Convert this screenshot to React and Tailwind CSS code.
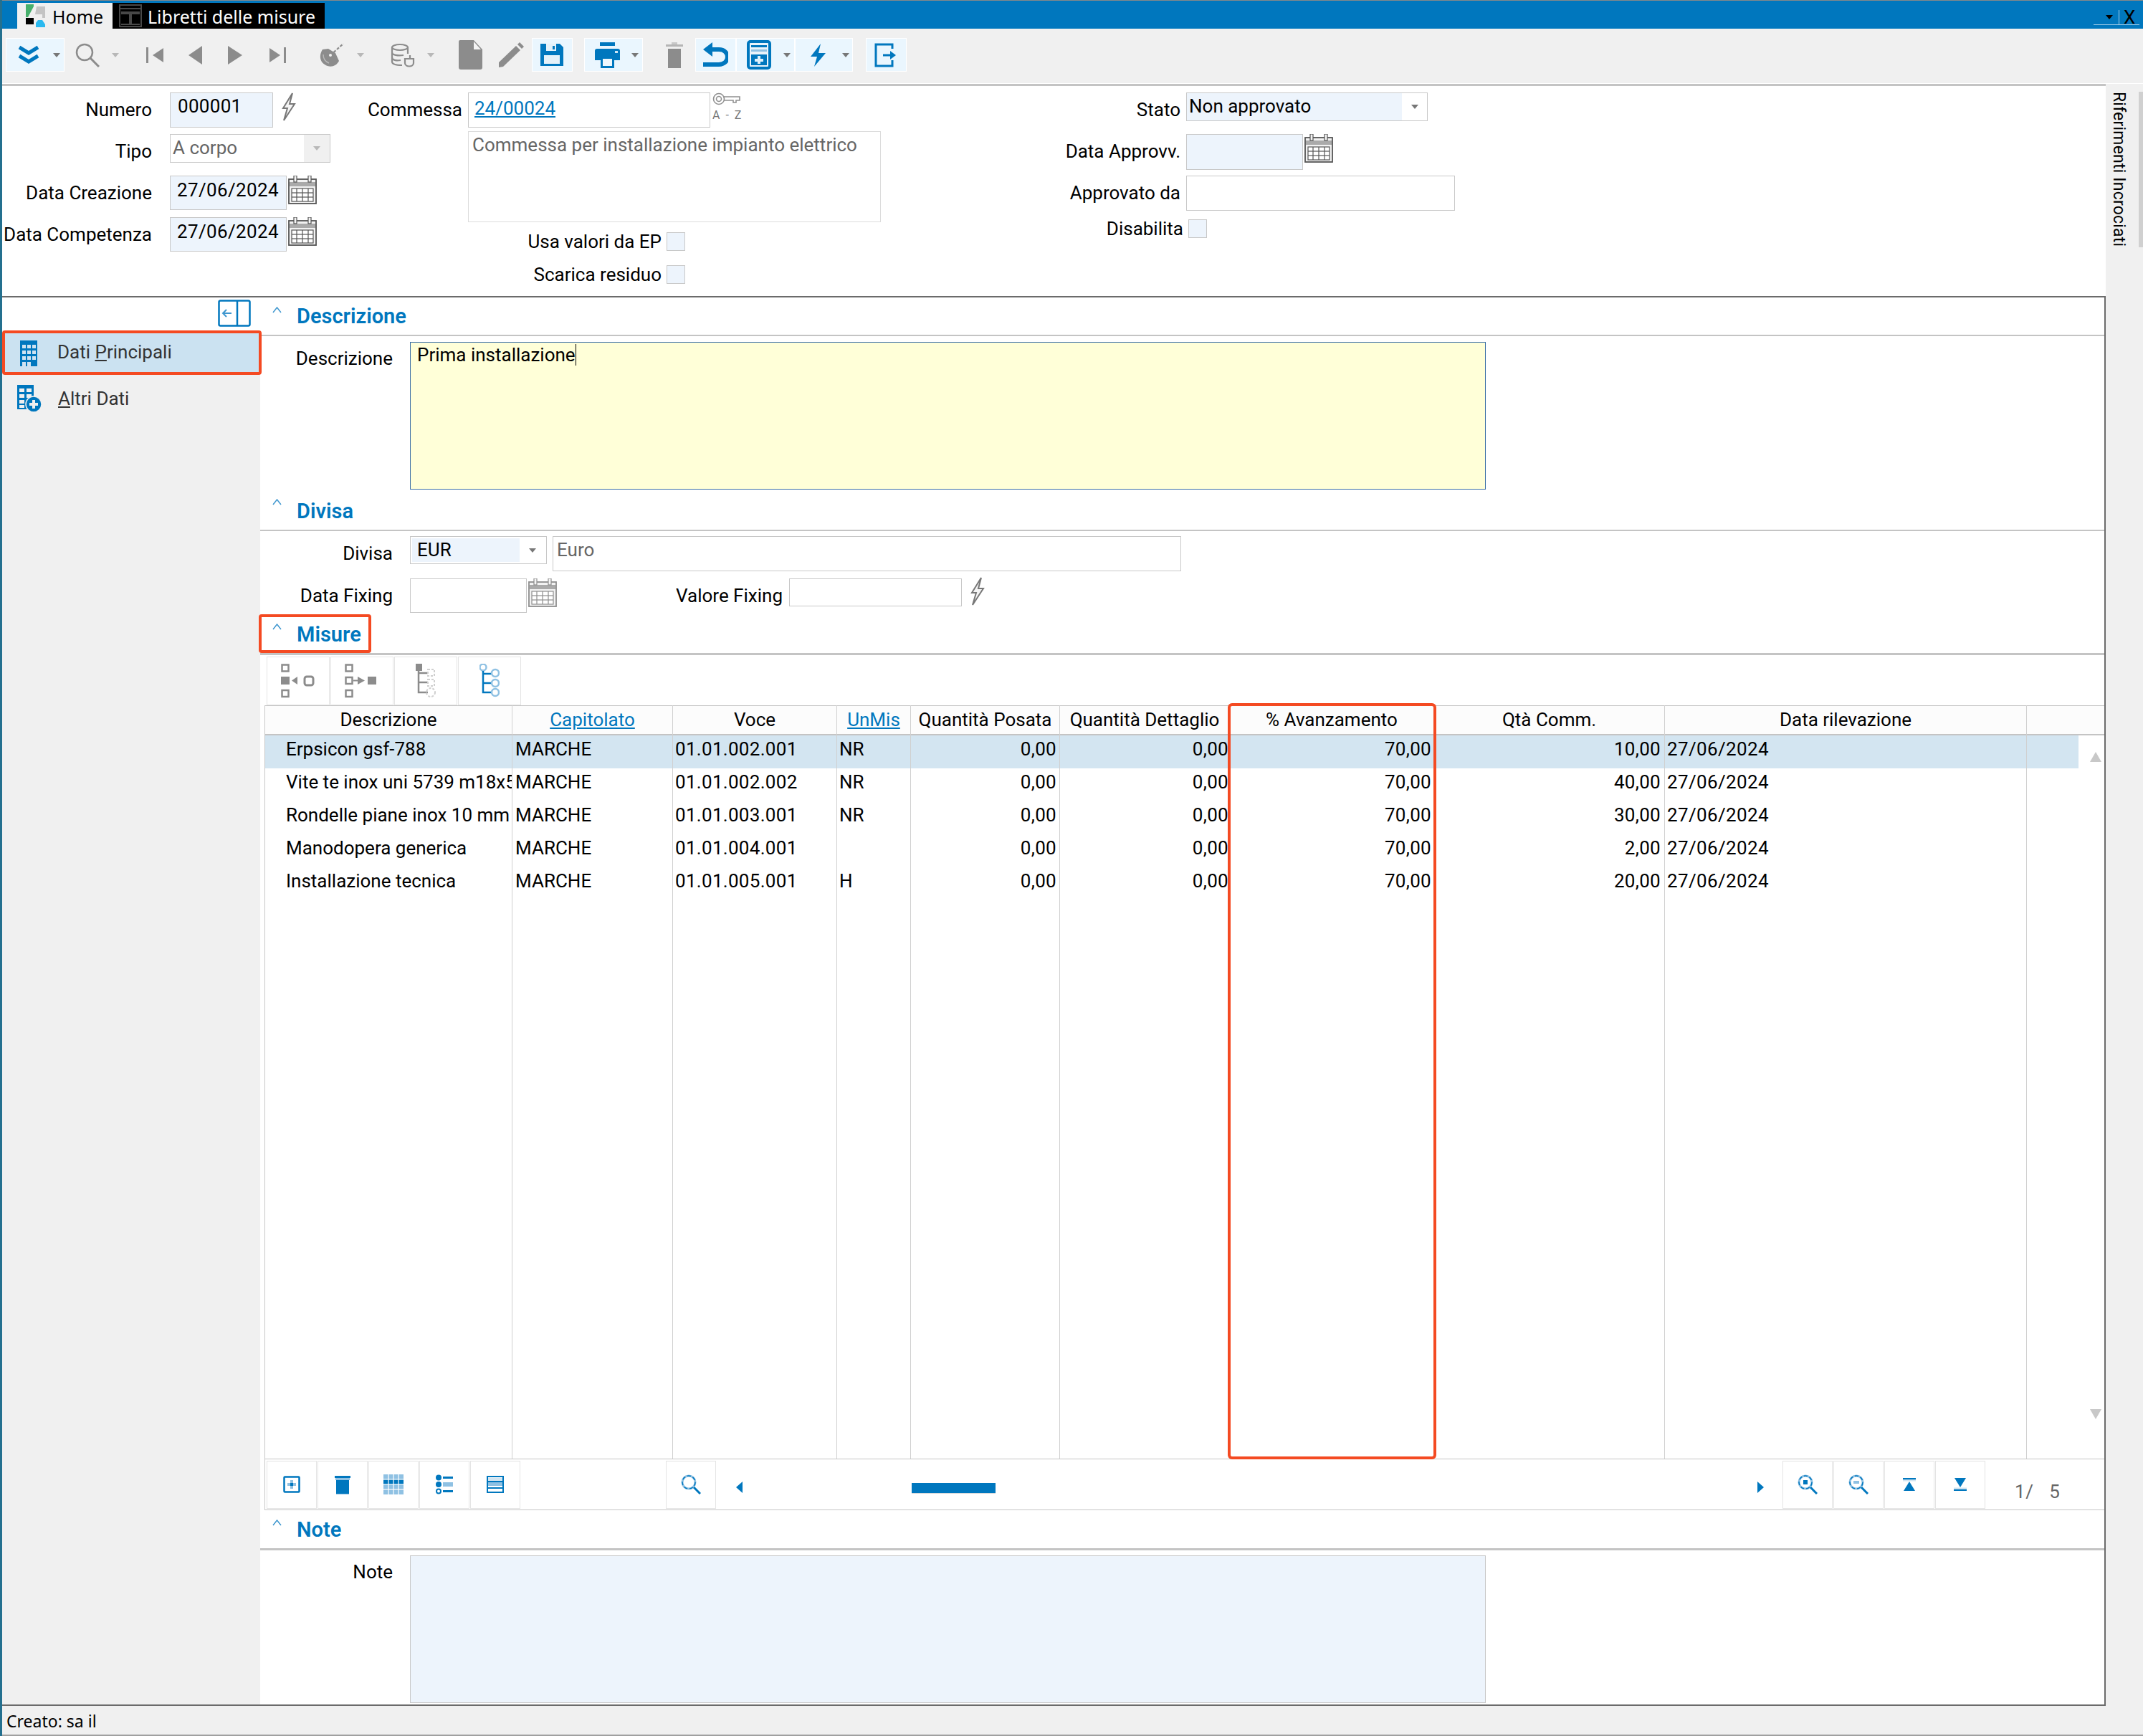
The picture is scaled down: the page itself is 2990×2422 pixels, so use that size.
import React from 'react';

const BLUE = '#0077be';
const LB = '#8fc1e3';
const GR = '#8c8c8c';

const Caret = ({ light, dark, className = '' }) => (
  <svg width="10" height="6" viewBox="0 0 10 6" className={className}>
    <polygon points="0,0 10,0 5,6" fill={dark ? '#000000' : light ? '#b8b8b8' : '#777777'} />
  </svg>
);

const Logo = () => (
  <svg width="27" height="32" viewBox="0 0 27 32">
    <polygon points="0,0 11,0 11,3 3,18 0,18" fill="#47b06c" />
    <polygon points="15,3 27,3 27,19 23,19 23,14 13,14" fill="#c4c4c4" />
    <rect x="0" y="19" width="11" height="9" fill="#000" />
    <polygon points="17,22 23,22 27,28 27,32 14,32 14,26" fill="#2bb9ef" />
  </svg>
);

const TabIcon = () => (
  <svg width="32" height="32" viewBox="0 0 32 32">
    <rect x="1" y="1" width="30" height="30" fill="none" stroke="#484848" strokeWidth="2" />
    <rect x="1" y="5" width="30" height="2" fill="#484848" />
    <rect x="3" y="10" width="26" height="4" fill="#484848" />
    <rect x="5" y="15" width="9" height="12" fill="#000" />
    <rect x="18" y="15" width="9" height="12" fill="#000" />
    <rect x="14" y="14" width="4" height="15" fill="#484848" />
    <rect x="3" y="27" width="26" height="2" fill="#484848" />
  </svg>
);

const Chevrons = () => (
  <svg width="30" height="27" viewBox="0 0 30 27">
    <path d="M2 3 L15 11 L28 3" fill="none" stroke={BLUE} strokeWidth="5" />
    <path d="M2 15 L15 23 L28 15" fill="none" stroke={BLUE} strokeWidth="5" />
  </svg>
);

const SearchIcon = () => (
  <svg width="34" height="34" viewBox="0 0 34 34">
    <circle cx="13" cy="13" r="11" fill="none" stroke={GR} strokeWidth="2.5" />
    <line x1="21" y1="21" x2="33" y2="33" stroke={GR} strokeWidth="3" />
  </svg>
);

const First = () => (
  <svg width="24" height="24" viewBox="0 0 24 24">
    <rect x="0" y="1" width="3" height="22" fill={GR} />
    <polygon points="9,12 24,2 24,22" fill={GR} />
  </svg>
);
const Prev = () => (
  <svg width="19" height="26" viewBox="0 0 19 26"><polygon points="0,13 19,0 19,26" fill={GR} /></svg>
);
const Next = () => (
  <svg width="20" height="26" viewBox="0 0 20 26"><polygon points="20,13 0,0 0,26" fill={GR} /></svg>
);
const Last = () => (
  <svg width="23" height="24" viewBox="0 0 23 24">
    <rect x="20" y="1" width="3" height="22" fill={GR} />
    <polygon points="15,12 0,2 0,22" fill={GR} />
  </svg>
);

const Dish = () => (
  <svg width="35" height="34" viewBox="0 0 35 34">
    <path d="M4 9 C-1 17 0 26 7 30 C14 35 23 33 27 25 L22 14 L12 8 Z" fill={GR} />
    <line x1="15" y1="17" x2="33" y2="1" stroke={GR} strokeWidth="2.2" strokeDasharray="4 2" />
    <circle cx="15" cy="17" r="2" fill="#f0f0f0" />
    <path d="M5 16 C5 22 8 26 13 28" fill="none" stroke="#b8b8b8" strokeWidth="1.5" />
  </svg>
);

const Db = () => (
  <svg width="35" height="34" viewBox="0 0 35 34" fill="none" stroke={GR} strokeWidth="2.2">
    <ellipse cx="13" cy="6" rx="11" ry="4" />
    <path d="M2 6 V26 C2 30 8 31 16 31" />
    <path d="M24 6 V15" />
    <path d="M2 13 C2 17 10 18 18 17" />
    <path d="M2 20 C2 24 8 25 14 24" />
    <path d="M20 22 H32 V28 C32 34 20 34 20 28 Z" />
    <path d="M27 22 V17" />
  </svg>
);

const Doc = () => (
  <svg width="33" height="41" viewBox="0 0 33 41">
    <path d="M2 0 H21 L33 13 V38 Q33 41 30 41 H3 Q0 41 0 38 V2 Q0 0 2 0 Z" fill={GR} />
    <path d="M21 2 L31 13 H21 Z" fill="#f4f4f4" />
  </svg>
);

const Pencil = () => (
  <svg width="35" height="35" viewBox="0 0 35 35">
    <polygon points="0,28 24,5 30,11 6,34 0,35" fill={GR} />
    <polygon points="26,3 29,0 35,6 32,9" fill={GR} />
  </svg>
);

const Save = () => (
  <svg width="32" height="31" viewBox="0 0 32 31">
    <path d="M0 0 H27 L32 5 V31 H0 Z" fill={BLUE} />
    <rect x="8" y="0" width="14" height="10" fill="#e4f1f9" />
    <rect x="17" y="3" width="3" height="5" fill={BLUE} />
    <rect x="5" y="16" width="22" height="12" fill="#e4f1f9" />
  </svg>
);

const Printer = () => (
  <svg width="35" height="36" viewBox="0 0 35 36">
    <rect x="7" y="0" width="21" height="5" fill={BLUE} />
    <path d="M3 9 H32 Q35 9 35 12 V25 H0 V12 Q0 9 3 9 Z" fill={BLUE} />
    <rect x="28" y="12" width="4" height="3" fill="#cfe6f5" />
    <rect x="8" y="20" width="19" height="16" fill={BLUE} />
    <rect x="11" y="23" width="13" height="10" fill="#eef7fd" />
  </svg>
);

const TrashGrey = () => (
  <svg width="24" height="36" viewBox="0 0 24 36">
    <rect x="0" y="3" width="24" height="3" fill="#b5b5b5" />
    <rect x="8" y="0" width="8" height="3" fill="#c8c8c8" />
    <rect x="3" y="9" width="18" height="27" fill={GR} />
  </svg>
);

const Undo = () => (
  <svg width="35" height="35" viewBox="0 0 35 35">
    <polygon points="0,10 13,0 13,20" fill={BLUE} />
    <path d="M10 10 H22 C38 10 38 31 22 31 H0" fill="none" stroke={BLUE} strokeWidth="6" />
  </svg>
);

const Calc = () => (
  <svg width="34" height="41" viewBox="0 0 34 41">
    <rect x="2" y="2" width="30" height="37" rx="3" fill="#e9f3fa" stroke={BLUE} strokeWidth="4" />
    <rect x="6" y="7" width="22" height="3" fill={BLUE} />
    <rect x="6" y="13" width="22" height="3" fill={LB} />
    <rect x="6" y="20" width="22" height="15" fill={BLUE} />
    <rect x="15" y="22" width="4" height="11" fill="#dff0fa" />
    <rect x="11" y="26" width="12" height="4" fill="#dff0fa" />
  </svg>
);

const Bolt = () => (
  <svg width="21" height="32" viewBox="0 0 21 32">
    <polygon points="14,0 0,18 9,18 5,32 21,13 11,13" fill={BLUE} />
  </svg>
);

const ExitIcon = () => (
  <svg width="30" height="34" viewBox="0 0 30 34" fill="none">
    <path d="M25 8 V2 H2 V32 H25 V24" stroke={BLUE} strokeWidth="3" />
    <path d="M12 17 H24" stroke={BLUE} strokeWidth="3" />
    <polygon points="22,11 30,17 22,23" fill={BLUE} />
  </svg>
);

const BoltOutline = () => (
  <svg width="23" height="40" viewBox="0 0 23 40" fill="#f4f4f4" stroke="#777777" strokeWidth="2">
    <polygon points="17,1 4,22 10,22 5,39 20,16 13,16" />
  </svg>
);

const CalendarIcon = ({ light }) => {
  const c = light ? '#8e8e8e' : '#555555';
  return (
    <svg width="40" height="40" viewBox="0 0 40 40">
      <rect x="1" y="5" width="38" height="34" fill="#f2f2f2" stroke={c} strokeWidth="1.8" />
      <rect x="2" y="9" width="36" height="6" fill="#aaaaaa" />
      <rect x="8" y="0" width="4" height="9" fill="#f4f4f4" stroke={c} strokeWidth="1.2" />
      <rect x="28" y="0" width="4" height="9" fill="#f4f4f4" stroke={c} strokeWidth="1.2" />
      <g stroke={c} strokeWidth="1.2">
        <rect x="5" y="18" width="30" height="18" fill="#ffffff" />
        <line x1="5" y1="24" x2="35" y2="24" />
        <line x1="5" y1="30" x2="35" y2="30" />
        <line x1="12" y1="18" x2="12" y2="36" />
        <line x1="20" y1="18" x2="20" y2="36" />
        <line x1="28" y1="18" x2="28" y2="36" />
      </g>
    </svg>
  );
};

const KeyIcon = () => (
  <svg width="40" height="20" viewBox="0 0 40 20" fill="none" stroke="#909090" strokeWidth="1.6">
    <circle cx="9" cy="9" r="7.5" />
    <circle cx="9" cy="9" r="3.5" />
    <path d="M16 6 H38 V11 H33 V14 H29 V11 H16" />
  </svg>
);

const Collapse = () => (
  <svg width="46" height="38" viewBox="0 0 46 38" fill="none">
    <rect x="1.5" y="1.5" width="43" height="35" rx="2" stroke={BLUE} strokeWidth="2.5" />
    <line x1="27" y1="2" x2="27" y2="36" stroke={BLUE} strokeWidth="2.5" />
    <path d="M19 19 H7 M12 14 L7 19 L12 24" stroke="#3f97cf" strokeWidth="2" />
  </svg>
);

const SectionCaret = () => (
  <svg width="13" height="9" viewBox="0 0 13 9" fill="none">
    <path d="M1 8 L6.5 1 L12 8" stroke="#3f97cf" strokeWidth="1.5" />
  </svg>
);

const GridBuilding = () => (
  <svg width="27" height="36" viewBox="0 0 27 36">
    <rect x="0" y="0" width="24" height="36" fill={BLUE} />
    <g fill="#cfe3f1">
      <rect x="3" y="6" width="5" height="5" /><rect x="10" y="6" width="5" height="5" /><rect x="17" y="6" width="5" height="5" />
      <rect x="3" y="14" width="5" height="5" /><rect x="10" y="14" width="5" height="5" /><rect x="17" y="14" width="5" height="5" />
      <rect x="3" y="22" width="5" height="5" /><rect x="10" y="22" width="5" height="5" /><rect x="17" y="22" width="5" height="5" />
      <rect x="3" y="30" width="5" height="6" /><rect x="10" y="30" width="5" height="6" />
    </g>
  </svg>
);

const GridPlus = () => (
  <svg width="34" height="38" viewBox="0 0 34 38">
    <rect x="0" y="0" width="23" height="34" fill={BLUE} />
    <g fill="#f0f0f0">
      <rect x="3" y="5" width="7" height="5" /><rect x="13" y="5" width="7" height="5" />
      <rect x="3" y="13" width="7" height="5" /><rect x="13" y="13" width="7" height="5" />
      <rect x="3" y="21" width="7" height="5" />
      <rect x="3" y="28" width="7" height="4" />
    </g>
    <circle cx="23" cy="27" r="11" fill={BLUE} stroke="#f0f0f0" strokeWidth="1.5" />
    <rect x="17" y="25" width="12" height="4" fill="#f0f0f0" />
    <rect x="21" y="21" width="4" height="12" fill="#f0f0f0" />
  </svg>
);

const sq = { fill: 'none', stroke: GR, strokeWidth: 2.5 };
const Tree1 = () => (
  <svg width="48" height="48" viewBox="0 0 48 48">
    <rect x="1.5" y="1.5" width="9" height="9" {...sq} />
    <rect x="0" y="18" width="12" height="11" fill={GR} />
    <polygon points="15,23.5 23,18 23,29" fill={GR} />
    <rect x="33" y="18" width="12" height="12" rx="3" fill="none" stroke={GR} strokeWidth="3" />
    <rect x="1.5" y="37" width="9" height="9" {...sq} />
  </svg>
);
const Tree2 = () => (
  <svg width="48" height="48" viewBox="0 0 48 48">
    <rect x="1.5" y="1.5" width="9" height="9" {...sq} />
    <rect x="1.5" y="19" width="9" height="9" {...sq} />
    <rect x="1.5" y="37" width="9" height="9" {...sq} />
    <path d="M12 23.5 H18" stroke={GR} strokeWidth="2" />
    <polygon points="28,23.5 18,18 18,29" fill={GR} />
    <rect x="32" y="18" width="12" height="11" fill={GR} />
  </svg>
);
const Tree3 = () => (
  <svg width="28" height="48" viewBox="0 0 28 48">
    <rect x="0" y="0" width="9" height="10" fill={GR} />
    <path d="M4 10 V40 H17 M4 13 H17 M4 26 H17" fill="none" stroke={GR} strokeWidth="2.5" />
    <g fill="none" stroke="#cfcfcf" strokeWidth="2" strokeDasharray="3 2">
      <rect x="17" y="8" width="9" height="9" />
      <rect x="17" y="22" width="9" height="9" />
      <circle cx="21" cy="40" r="6" />
    </g>
  </svg>
);
const Tree4 = () => (
  <svg width="28" height="48" viewBox="0 0 28 48">
    <circle cx="5" cy="5" r="4.5" fill="none" stroke={LB} strokeWidth="2.5" />
    <path d="M5 10 V40 H17 M5 14 H17 M5 27 H17" fill="none" stroke={BLUE} strokeWidth="2.5" />
    <g fill="none" stroke={LB} strokeWidth="2.5">
      <circle cx="22" cy="13" r="5" /><circle cx="22" cy="27" r="5" /><circle cx="22" cy="40" r="5" />
    </g>
  </svg>
);

const AddBox = () => (
  <svg width="24" height="24" viewBox="0 0 24 24">
    <rect x="1.5" y="1.5" width="21" height="21" rx="1" fill="#fff" stroke={BLUE} strokeWidth="2.5" />
    <rect x="10" y="6" width="4" height="12" fill={LB} />
    <rect x="6" y="10" width="12" height="4" fill={LB} />
    <rect x="10" y="10" width="4" height="4" fill={BLUE} />
  </svg>
);
const TrashBlue = () => (
  <svg width="22" height="28" viewBox="0 0 22 28">
    <rect x="0" y="2" width="22" height="3" fill={BLUE} />
    <rect x="1" y="5" width="20" height="3" fill={LB} />
    <rect x="2" y="8" width="18" height="19" fill={BLUE} />
    <rect x="2" y="27" width="18" height="1" fill={LB} />
  </svg>
);
const GridBlue = () => (
  <svg width="28" height="28" viewBox="0 0 28 28">
    <rect width="28" height="28" fill={LB} />
    <rect x="0" y="7" width="28" height="7" fill={BLUE} />
    <g stroke="#fff" strokeWidth="1.2">
      <line x1="7" y1="0" x2="7" y2="28" /><line x1="14" y1="0" x2="14" y2="28" /><line x1="21" y1="0" x2="21" y2="28" />
      <line x1="0" y1="7" x2="28" y2="7" /><line x1="0" y1="14" x2="28" y2="14" /><line x1="0" y1="21" x2="28" y2="21" />
    </g>
  </svg>
);
const ListBlue = () => (
  <svg width="24" height="28" viewBox="0 0 24 28">
    <circle cx="4" cy="4.5" r="4" fill={BLUE} /><rect x="10" y="3" width="14" height="3" fill={BLUE} />
    <circle cx="4" cy="14" r="4" fill={BLUE} /><rect x="10" y="11" width="14" height="6" fill={LB} />
    <circle cx="4" cy="23.5" r="3" fill="#fff" stroke={BLUE} strokeWidth="2" /><rect x="10" y="22" width="14" height="3" fill={BLUE} />
  </svg>
);
const RowsBlue = () => (
  <svg width="24" height="24" viewBox="0 0 24 24">
    <rect x="1" y="1" width="22" height="22" fill="#fff" stroke={BLUE} strokeWidth="2" />
    <rect x="2" y="3" width="20" height="4" fill="#d3e5f1" />
    <rect x="2" y="9" width="20" height="5" fill={LB} />
    <rect x="2" y="7" width="20" height="2" fill={BLUE} />
    <rect x="2" y="16" width="20" height="2" fill={BLUE} />
  </svg>
);
const Mag = ({ mark }) => (
  <svg width="28" height="28" viewBox="0 0 28 28">
    <circle cx="11" cy="11" r="9" fill="none" stroke={LB} strokeWidth="3" />
    <circle cx="11" cy="11" r="9" fill="none" stroke={BLUE} strokeWidth="1.5" strokeDasharray="5 3" />
    <line x1="18" y1="18" x2="27" y2="27" stroke={BLUE} strokeWidth="3" />
    {mark === 'plus' && <rect x="8" y="8" width="6" height="6" fill={BLUE} />}
    {mark === 'minus' && <rect x="7" y="9" width="8" height="4" fill={LB} />}
  </svg>
);
const TopIcon = () => (
  <svg width="18" height="18" viewBox="0 0 18 18">
    <rect width="18" height="2.5" fill={BLUE} />
    <rect x="0" y="2.5" width="18" height="2" fill="#d3e5f1" />
    <polygon points="9,5 17,18 1,18" fill={BLUE} />
  </svg>
);
const BottomIcon = () => (
  <svg width="18" height="18" viewBox="0 0 18 18">
    <rect y="15.5" width="18" height="2.5" fill={BLUE} />
    <rect y="13.5" width="18" height="2" fill="#d3e5f1" />
    <polygon points="9,13 17,0 1,0" fill={BLUE} />
  </svg>
);
const ArrowL = () => (
  <svg width="9" height="16" viewBox="0 0 9 16"><polygon points="0,8 9,0 9,16" fill={BLUE} /></svg>
);
const ArrowR = () => (
  <svg width="9" height="16" viewBox="0 0 9 16"><polygon points="9,8 0,0 0,16" fill={BLUE} /></svg>
);

const Section = ({ h, title, children }) => (
  <div className={`relative flex items-center shrink-0 border-b-[#c4c4c4] ${h}`}>
    <div className="absolute left-[17px] top-[13px]"><SectionCaret /></div>
    <span className="pl-[51px] text-[29px] font-semibold text-[#0077be]">{title}</span>
    {children}
  </div>
);

const Field = ({ className = '', children }) => (
  <div className={`shrink-0 border border-[#c8c8c8] leading-[38px] whitespace-nowrap overflow-hidden ${className}`}>{children}</div>
);

const Label = ({ className = '', children }) => (
  <div className={`shrink-0 text-right leading-[48px] whitespace-nowrap ${className}`}>{children}</div>
);

const Check = () => <div className="w-[26px] h-[26px] shrink-0 border border-[#c8c8c8] bg-[#edf4fc]" />;

const rowsData = [
  ['Erpsicon gsf-788', 'MARCHE', '01.01.002.001', 'NR', '0,00', '0,00', '70,00', '10,00', '27/06/2024'],
  ['Vite te inox uni 5739 m18x55', 'MARCHE', '01.01.002.002', 'NR', '0,00', '0,00', '70,00', '40,00', '27/06/2024'],
  ['Rondelle piane inox 10 mm', 'MARCHE', '01.01.003.001', 'NR', '0,00', '0,00', '70,00', '30,00', '27/06/2024'],
  ['Manodopera generica', 'MARCHE', '01.01.004.001', '', '0,00', '0,00', '70,00', '2,00', '27/06/2024'],
  ['Installazione tecnica', 'MARCHE', '01.01.005.001', 'H', '0,00', '0,00', '70,00', '20,00', '27/06/2024'],
];

const columns = [
  { w: 'w-[345px]', head: 'Descrizione', cell: 'pl-[29px]' },
  { w: 'w-[224px]', head: 'Capitolato', link: true, cell: 'pl-[4px]' },
  { w: 'w-[229px]', head: 'Voce', cell: 'pl-[3px] tracking-[0.3px]' },
  { w: 'w-[103px]', head: 'UnMis', link: true, cell: 'pl-[3px]' },
  { w: 'w-[208px]', head: 'Quantità Posata', cell: 'pr-[4px] text-right tracking-[0.3px]' },
  { w: 'w-[237px]', head: 'Quantità Dettaglio', cell: 'pr-[1px] text-right tracking-[0.3px]' },
  { w: 'w-[285px]', head: '% Avanzamento', cell: 'pr-[3px] text-right tracking-[0.3px]' },
  { w: 'w-[322px]', head: 'Qtà Comm.', cell: 'pr-[5px] text-right tracking-[0.3px]' },
  { w: 'w-[505px]', head: 'Data rilevazione', cell: 'pl-[3px] tracking-[0.35px]' },
];

const Btn = ({ className = '', children }) => (
  <div className={`flex items-center justify-center shrink-0 border border-[#e4e4e4] ${className}`}>{children}</div>
);

export default function App() {
  return (
    <div className="w-[2990px] h-[2422px] flex flex-col bg-white overflow-hidden text-[26px] text-black font-['Roboto',sans-serif] border-l-[3px] border-l-[#24708f]">
      <div className="h-[40px] shrink-0 bg-[#0077be] border-t border-t-[#888888] flex items-end pl-[21px]">
        <div className="h-[36px] w-[133px] bg-[#f0f0f0] flex items-center pl-[12px] gap-[10px]">
          <Logo />
          <span className="font-['Noto_Sans',sans-serif] text-[25px] mt-[4px]">Home</span>
        </div>
        <div className="h-[36px] w-[296px] bg-black flex items-center pl-[9px] gap-[8px] text-white">
          <TabIcon />
          <span className="font-['Noto_Sans',sans-serif] text-[25px] mt-[4px] whitespace-nowrap">Libretti delle misure</span>
        </div>
        <div className="ml-auto mb-[5px] h-[21px] w-[64px] mr-[5px] flex items-center border-b border-b-[#a8cfe8]">
          <div className="w-[36px] h-full flex items-center justify-center border-r border-r-[#a8cfe8] pl-[8px]"><Caret dark /></div>
          <span className="pl-[6px] text-[26px] leading-none">X</span>
        </div>
      </div>

      <div className="h-[77px] shrink-0 bg-[#f0f0f0] border-b border-b-white flex items-start pt-[13px] pl-[5px]">
        <div className="h-[47px] w-[82px] bg-[#eaf6fe] border border-white flex items-center pl-[16px]"><Chevrons /><Caret className="ml-[19px]" /></div>
        <div className="h-[47px] flex items-center ml-[15px]"><SearchIcon /><Caret light className="ml-[17px]" /></div>
        <div className="h-[47px] flex items-center ml-[38px]"><First /></div>
        <div className="h-[47px] flex items-center ml-[35px]"><Prev /></div>
        <div className="h-[47px] flex items-center ml-[36px]"><Next /></div>
        <div className="h-[47px] flex items-center ml-[38px]"><Last /></div>
        <div className="h-[47px] flex items-center ml-[47px]"><Dish /><Caret light className="ml-[17px]" /></div>
        <div className="h-[47px] flex items-center ml-[37px]"><Db /><Caret light className="ml-[16px]" /></div>
        <div className="h-[47px] flex items-center ml-[34px]"><Doc /></div>
        <div className="h-[47px] flex items-center ml-[23px]"><Pencil /></div>
        <div className="h-[47px] w-[57px] ml-[11px] bg-[#eaf6fe] border border-white flex items-center pl-[11px]"><Save /></div>
        <div className="h-[47px] w-[82px] ml-[16px] bg-[#eaf6fe] border border-white flex items-center pl-[14px]"><Printer /><Caret className="ml-[16px]" /></div>
        <div className="h-[47px] flex items-center ml-[32px]"><TrashGrey /></div>
        <div className="h-[47px] w-[57px] ml-[17px] bg-[#eaf6fe] border border-white flex items-center pl-[10px]"><Undo /></div>
        <div className="h-[47px] w-[82px] bg-[#eaf6fe] border border-white flex items-center pl-[14px]"><Calc /><Caret className="ml-[17px]" /></div>
        <div className="h-[47px] w-[81px] bg-[#eaf6fe] border border-white flex items-center pl-[21px]"><Bolt /><Caret className="ml-[23px]" /></div>
        <div className="h-[47px] w-[57px] ml-[18px] bg-[#eaf6fe] border border-white flex items-center pl-[11px]"><ExitIcon /></div>
      </div>

      <div className="flex-1 min-h-0 flex">
        <div className="w-[2935px] shrink-0 flex flex-col">
          <div className="h-[296px] shrink-0 border-t-[3px] border-t-[#c4c4c4] pt-[9px] flex items-start">
            <div className="w-[458px] shrink-0 flex flex-col">
              <div className="h-[58px] flex items-start">
                <Label className="w-[209px]">Numero</Label>
                <Field className="ml-[25px] w-[144px] h-[49px] bg-[#edf4fc] pl-[10px] !leading-[36px] tracking-[0.3px]">000001</Field>
                <div className="ml-[10px]"><BoltOutline /></div>
              </div>
              <div className="h-[58px] flex items-start">
                <Label className="w-[209px]">Tipo</Label>
                <div className="ml-[25px] w-[224px] h-[40px] shrink-0 border border-[#c8c8c8] flex items-stretch text-[#666666]">
                  <span className="flex-1 pl-[3px] leading-[36px]">A corpo</span>
                  <div className="w-[36px] bg-[#f0f0f0] flex items-center justify-center"><Caret light /></div>
                </div>
              </div>
              <div className="h-[58px] flex items-start">
                <Label className="w-[209px]">Data Creazione</Label>
                <Field className="ml-[25px] w-[163px] h-[48px] bg-[#edf4fc] pl-[9px] tracking-[0.35px]">27/06/2024</Field>
                <div className="ml-[2px]"><CalendarIcon /></div>
              </div>
              <div className="h-[58px] flex items-start">
                <Label className="w-[209px]">Data Competenza</Label>
                <Field className="ml-[25px] w-[163px] h-[48px] bg-[#edf4fc] pl-[9px] tracking-[0.35px]">27/06/2024</Field>
                <div className="ml-[2px]"><CalendarIcon /></div>
              </div>
            </div>

            <div className="w-[768px] shrink-0 flex flex-col">
              <div className="flex items-start">
                <Label className="w-[184px]">Commessa</Label>
                <Field className="ml-[8px] w-[338px] h-[49px] pl-[8px]">
                  <span className="text-[#0077be] underline leading-[42px]">24/00024</span>
                </Field>
                <div className="ml-[3px] flex flex-col items-start">
                  <KeyIcon />
                  <span className="text-[16px] tracking-[2px] text-[#777777] leading-[24px] whitespace-nowrap">A - Z</span>
                </div>
              </div>
              <div className="ml-[192px] mt-[5px] w-[576px] h-[127px] border border-[#dcdcdc] pl-[5px] text-[#666666] leading-[36px] whitespace-nowrap">
                Commessa per installazione impianto elettrico
              </div>
              <div className="mt-[14px] h-[26px] flex items-center">
                <div className="w-[462px] text-right whitespace-nowrap">Usa valori da EP</div>
                <div className="ml-[7px]"><Check /></div>
              </div>
              <div className="mt-[20px] h-[26px] flex items-center">
                <div className="w-[462px] text-right whitespace-nowrap">Scarica residuo</div>
                <div className="ml-[7px]"><Check /></div>
              </div>
            </div>

            <div className="flex-1 flex flex-col">
              <div className="h-[58px] flex items-start">
                <Label className="w-[418px]">Stato</Label>
                <div className="ml-[8px] w-[337px] h-[40px] shrink-0 border border-[#c8c8c8] flex">
                  <span className="w-[300px] bg-[#edf4fc] pl-[3px] leading-[36px] whitespace-nowrap">Non approvato</span>
                  <div className="flex-1 flex items-center justify-center"><Caret /></div>
                </div>
              </div>
              <div className="h-[58px] flex items-start">
                <Label className="w-[418px]">Data Approvv.</Label>
                <Field className="ml-[8px] w-[163px] h-[50px] bg-[#edf4fc]" />
                <div className="ml-[2px]"><CalendarIcon /></div>
              </div>
              <div className="h-[61px] flex items-start">
                <Label className="w-[418px]">Approvato da</Label>
                <Field className="ml-[8px] w-[375px] h-[49px]" />
              </div>
              <div className="h-[26px] flex items-center">
                <div className="w-[422px] text-right whitespace-nowrap">Disabilita</div>
                <div className="ml-[7px]"><Check /></div>
              </div>
            </div>
          </div>

          <div className="flex-1 min-h-0 flex border-y-2 border-r-2 border-[#6b6b6b]">
            <div className="w-[360px] shrink-0 flex flex-col bg-[#f0f0f0]">
              <div className="h-[46px] shrink-0 bg-white flex items-start justify-end pr-[13px] pt-[3px]"><Collapse /></div>
              <div className="h-[62px] w-[362px] relative z-10 shrink-0 border-[4px] border-[#f44a22] rounded-[4px] bg-[#cbe2f1] flex items-center pl-[21px] text-[#333333]">
                <div className="mt-[2px]"><GridBuilding /></div>
                <span className="ml-[25px] leading-none -mt-[2px]">Dati <span className="underline">P</span>rincipali</span>
              </div>
              <div className="h-[66px] shrink-0 flex items-center pl-[21px] text-[#333333]">
                <GridPlus />
                <span className="ml-[23px] leading-none"><span className="underline">A</span>ltri Dati</span>
              </div>
            </div>

            <div className="flex-1 min-w-0 flex flex-col">
              <Section h="h-[54px] border-b-2 pt-[2px]" title="Descrizione" />
              <div className="h-[214px] shrink-0 flex items-start pt-[8px]">
                <div className="w-[185px] text-right leading-[46px]">Descrizione</div>
                <div className="ml-[24px] w-[1501px] h-[206px] bg-[#ffffd8] border border-[#3b6ea5] pl-[9px] leading-[34px] whitespace-nowrap flex items-start">
                  <span>Prima installazione</span>
                  <span className="w-[1px] h-[30px] mt-[2px] bg-black" />
                </div>
              </div>

              <Section h="h-[58px] border-b-2 pt-[5px]" title="Divisa" />
              <div className="h-[116px] shrink-0 flex flex-col pt-[7px]">
                <div className="h-[59px] flex items-start">
                  <Label className="w-[185px]">Divisa</Label>
                  <div className="ml-[24px] w-[191px] h-[39px] shrink-0 border border-[#c8c8c8] p-[2px] flex">
                    <span className="w-[150px] bg-[#edf4fc] pl-[7px] leading-[32px]">EUR</span>
                    <div className="flex-1 flex items-center justify-center"><Caret /></div>
                  </div>
                  <Field className="ml-[8px] w-[877px] h-[49px] pl-[5px] text-[#666666] !leading-[36px]">Euro</Field>
                </div>
                <div className="flex items-start">
                  <Label className="w-[185px]">Data Fixing</Label>
                  <Field className="ml-[24px] w-[163px] h-[48px]" />
                  <div className="ml-[2px]"><CalendarIcon light /></div>
                  <Label className="w-[315px]">Valore Fixing</Label>
                  <Field className="ml-[9px] w-[241px] h-[39px]" />
                  <div className="ml-[10px] -mt-[2px]"><BoltOutline /></div>
                </div>
              </div>

              <Section h="h-[57px] border-b-[3px] pt-[3px]" title="Misure">
                <div className="absolute -left-[2px] top-0 w-[157px] h-[54px] border-[4px] border-[#f44a22] rounded-[4px]" />
              </Section>

              <div className="h-[70px] shrink-0 flex items-start gap-[1px] pl-[9px] pt-[2px]">
                <Btn className="w-[88px] h-[68px]"><Tree1 /></Btn>
                <Btn className="w-[88px] h-[68px]"><Tree2 /></Btn>
                <Btn className="w-[88px] h-[68px]"><Tree3 /></Btn>
                <Btn className="w-[88px] h-[68px]"><Tree4 /></Btn>
              </div>

              <div className="ml-[6px] flex flex-col border-l border-l-[#c8c8c8] relative">
                <div className="h-[1051px] flex">
                  {columns.map((col, c) => (
                    <div key={col.head} className={`shrink-0 h-full flex flex-col border-r border-r-[#d0d0d0] ${col.w}`}>
                      <div className="h-[42px] shrink-0 border-y-[#c4c4c4] border-t border-b-2 bg-[#fcfcfc] text-center leading-[38px] whitespace-nowrap overflow-hidden">
                        {col.link ? <span className="text-[#0077be] underline">{col.head}</span> : col.head}
                      </div>
                      {rowsData.map((r, i) => (
                        <div key={i} className={`h-[46px] shrink-0 leading-[38px] whitespace-nowrap overflow-hidden ${col.cell} ${i === 0 ? 'bg-[#d3e5f1]' : ''}`}>
                          {r[c]}
                        </div>
                      ))}
                    </div>
                  ))}
                  <div className="w-[72px] shrink-0 flex flex-col">
                    <div className="h-[42px] shrink-0 border-y-[#c4c4c4] border-t border-b-2 bg-[#fcfcfc]" />
                    <div className="h-[46px] shrink-0 bg-[#d3e5f1]" />
                  </div>
                  <div className="flex-1 flex flex-col items-center pl-[12px]">
                    <div className="h-[42px] -ml-[12px] w-[calc(100%+12px)] shrink-0 border-y-[#c4c4c4] border-t border-b-2 bg-[#fcfcfc]" />
                    <svg width="16" height="14" viewBox="0 0 16 14" className="mt-[23px]"><polygon points="8,0 16,14 0,14" fill="#c8c8c8" /></svg>
                    <svg width="16" height="14" viewBox="0 0 16 14" className="mt-[903px]"><polygon points="8,14 16,0 0,0" fill="#c8c8c8" /></svg>
                  </div>
                </div>

                <div className="absolute left-[1343px] -top-[3px] w-[291px] h-[1055px] border-[4px] border-[#f44a22] rounded-[6px]" />

                <div className="h-[72px] shrink-0 border-y border-[#c4c4c4] flex items-center pl-[2px]">
                  <div className="flex gap-[1px]">
                    <Btn className="w-[70px] h-[67px]"><AddBox /></Btn>
                    <Btn className="w-[70px] h-[67px]"><TrashBlue /></Btn>
                    <Btn className="w-[70px] h-[67px]"><GridBlue /></Btn>
                    <Btn className="w-[70px] h-[67px]"><ListBlue /></Btn>
                    <Btn className="w-[70px] h-[67px]"><RowsBlue /></Btn>
                  </div>
                  <Btn className="ml-[203px] w-[70px] h-[67px]"><Mag /></Btn>
                  <div className="ml-[28px] mt-[8px]"><ArrowL /></div>
                  <div className="ml-[236px] mt-[10px] w-[117px] h-[15px] bg-[#0077be] border-b border-b-[#d8d8d8]" />
                  <div className="ml-[1063px] mt-[8px]"><ArrowR /></div>
                  <div className="ml-[26px] flex gap-[1px]">
                    <Btn className="w-[70px] h-[67px]"><Mag mark="plus" /></Btn>
                    <Btn className="w-[70px] h-[67px]"><Mag mark="minus" /></Btn>
                    <Btn className="w-[70px] h-[67px]"><TopIcon /></Btn>
                    <Btn className="w-[70px] h-[67px]"><BottomIcon /></Btn>
                  </div>
                  <span className="ml-[41px] mt-[20px] text-[#666666] whitespace-pre tracking-[0.7px]">1/   5</span>
                </div>
              </div>

              <Section h="h-[56px] border-b-[3px] pt-[2px]" title="Note" />
              <div className="flex-1 min-h-0 flex items-start pt-[7px]">
                <div className="w-[185px] text-right leading-[46px]">Note</div>
                <div className="ml-[24px] w-[1501px] h-[206px] bg-[#edf4fc] border border-[#c8c8c8]" />
              </div>
            </div>
          </div>
        </div>

        <div className="flex-1 bg-[#f0f0f0] flex items-start pt-[11px]">
          <span className="ml-[6px] [writing-mode:vertical-rl] text-[23px] tracking-[0.2px] whitespace-nowrap leading-[24px]">Riferimenti Incrociati</span>
          <div className="ml-auto w-[6px] h-[217px] bg-[#d0d0d0]" />
        </div>
      </div>

      <div className="h-[42px] shrink-0 bg-[#f0f0f0] border-b-2 border-b-[#a0a0a0] flex items-center pl-[6px]">
        <span className="font-['Noto_Sans',sans-serif] text-[23px] mt-[2px]">Creato: sa il</span>
      </div>
    </div>
  );
}
